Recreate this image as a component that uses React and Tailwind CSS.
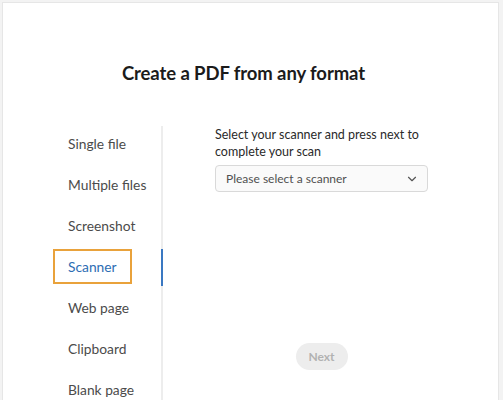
import { ChevronDown } from "lucide-react";

const items = [
  "Single file",
  "Multiple files",
  "Screenshot",
  "Scanner",
  "Web page",
  "Clipboard",
  "Blank page",
];

export default function App() {
  const active = "Scanner";

  return (
    <div
      className="h-[400px] w-[503px] overflow-hidden bg-[#f3f3f3] pt-[2px] pl-[2px] pr-[4px]"
      style={{ fontFamily: "Lato, 'Open Sans', sans-serif" }}
    >
      <div className="h-[420px] border border-[#e6e6e6] bg-white">
        <h1 className="mt-[56px] pr-[14px] text-center text-[18.5px] font-bold leading-[28px] tracking-[-0.1px] text-[#1b1b1b]">
          Create a PDF from any format
        </h1>
        <div className="mt-[39px] flex">
          <ul className="flex w-[160px] flex-col gap-[6px] border-r-2 border-[#ededed] pl-[50px]">
            {items.map((item) => (
              <li key={item} className="relative whitespace-nowrap">
                <div
                  className={`inline-block h-[35px] border-2 px-[13px] text-[13.8px] leading-[31px] ${
                    item === active
                      ? "border-[#e9a23b] text-[#2d6db3]"
                      : "border-transparent text-[#4b4b4b]"
                  }`}
                >
                  {item}
                </div>
                {item === active && (
                  <span className="absolute right-[-2px] top-0 h-[37px] w-[2px] bg-[#3a78c2]" />
                )}
              </li>
            ))}
          </ul>
          <div className="ml-[52px] flex w-[213px] flex-col">
            <p className="text-[12.5px] leading-[17px] text-[#2a2a2a]">
              Select your scanner and press next to complete your scan
            </p>
            <button className="mt-[5px] flex h-[27px] items-center justify-between rounded-[4px] border border-[#d9d9d9] bg-[#fafafa] pl-[10px] pr-[8px] text-[12px] text-[#505050]">
              <span>Please select a scanner</span>
              <ChevronDown size={14} strokeWidth={2} className="text-[#555]" />
            </button>
            <button className="mx-auto mt-[151px] h-[27px] w-[52px] rounded-full bg-[#ededed] text-[12px] font-bold text-[#b2b2b2]">
              Next
            </button>
          </div>
        </div>
      </div>
    </div>
  );
}
